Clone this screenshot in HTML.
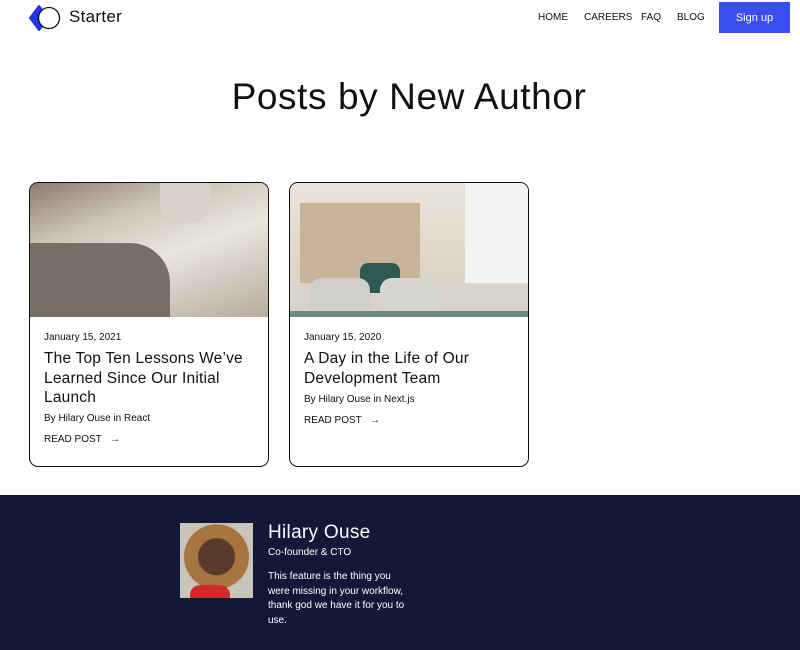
<!DOCTYPE html>
<html><head><style>
*{margin:0;padding:0;box-sizing:border-box}
body{width:800px;height:650px;overflow:hidden;background:#fff;font-family:"Liberation Sans",sans-serif;color:#111;position:relative}
.abs{position:absolute}
.nav a{position:absolute;top:12px;font-size:10px;color:#111;text-decoration:none;white-space:nowrap}
.card{position:absolute;top:182px;width:240px;height:285px;border:1.5px solid #111;border-radius:9px;overflow:hidden;background:#fff}
.card .img{height:134px}
.date{position:absolute;left:14px;top:149px;font-size:10px}
.title{position:absolute;left:14px;top:166px;width:215px;font-size:15.5px;line-height:19.5px;letter-spacing:0.2px}
.by{font-size:10px;position:absolute;left:14px}
.read{font-size:10px;position:absolute;left:14px}
</style></head><body>
<svg class="abs" style="left:29px;top:4px" width="42" height="28" viewBox="0 0 42 28">
<path d="M10 2 L20 14 L10 26 L1 14 Z" fill="#2134e8" stroke="#2134e8" stroke-linejoin="round" stroke-width="2"/>
<circle cx="20" cy="14" r="10.5" fill="#fff" stroke="#111" stroke-width="1.3"/>
</svg>
<div class="abs" style="left:69px;top:7px;font-size:17px;letter-spacing:0.3px">Starter</div>
<div class="nav"><a style="left:538px">HOME</a><a style="left:584px">CAREERS</a><a style="left:641px">FAQ</a><a style="left:677px">BLOG</a></div>
<div class="abs" style="left:719px;top:2px;width:71px;height:31px;background:#3a4ef0;color:#fff;font-size:11px;text-align:center;line-height:33px">Sign up</div>
<div class="abs" style="left:0;width:818px;top:76px;text-align:center;font-size:37px;letter-spacing:0.6px">Posts by New Author</div>

<div class="card" style="left:29px">
<div class="img" style="background:linear-gradient(160deg,#8a7c6c 0%,#cfc6b8 30%,#e9e5df 55%,#b7ab9c 100%);position:relative">
<div class="abs" style="left:0;top:60px;width:140px;height:74px;background:#7a6f66;border-radius:0 40px 0 0"></div>
<div class="abs" style="left:130px;top:0;width:50px;height:40px;background:#d8d2c8;border-radius:0 0 20px 20px"></div>
</div>
<div class="date">January 15, 2021</div>
<div class="title">The Top Ten Lessons We’ve Learned Since Our Initial Launch</div>
<div class="by" style="top:230px">By Hilary Ouse in React</div>
<div class="read" style="top:251px">READ POST &nbsp;&nbsp;→</div>
</div>

<div class="card" style="left:289px">
<div class="img" style="background:linear-gradient(180deg,#e8e4dc 0%,#e0d6c8 60%,#d5d2cc 100%);position:relative">
<div class="abs" style="left:10px;top:20px;width:120px;height:80px;background:#c9b49a"></div>
<div class="abs" style="left:175px;top:0;width:65px;height:100px;background:#f3f3f1"></div>
<div class="abs" style="left:70px;top:80px;width:40px;height:30px;background:#2c5a52;border-radius:8px"></div>
<div class="abs" style="left:20px;top:95px;width:60px;height:39px;background:#cfd0cc;border-radius:12px"></div>
<div class="abs" style="left:90px;top:95px;width:60px;height:39px;background:#d5d6d2;border-radius:12px"></div>
<div class="abs" style="left:0;top:128px;width:240px;height:6px;background:#6e8a84"></div>
</div>
<div class="date">January 15, 2020</div>
<div class="title">A Day in the Life of Our Development Team</div>
<div class="by" style="top:211px">By Hilary Ouse in Next.js</div>
<div class="read" style="top:232px">READ POST &nbsp;&nbsp;→</div>
</div>

<div class="abs" style="left:0;top:495px;width:800px;height:155px;background:#121838"></div>
<div class="abs" style="left:180px;top:523px;width:73px;height:75px;background:radial-gradient(circle at 50% 45%,#5a3a2a 0 18px,#a8743f 19px 32px,#c9c4b9 33px);overflow:hidden">
<div class="abs" style="left:10px;top:62px;width:40px;height:20px;background:#d22a2a;border-radius:10px 10px 0 0"></div></div>
<div class="abs" style="left:268px;top:522px;font-size:19px;color:#fff;letter-spacing:0.3px">Hilary Ouse</div>
<div class="abs" style="left:268px;top:547px;font-size:10px;color:#fff">Co-founder &amp; CTO</div>
<div class="abs" style="left:268px;top:570px;width:140px;font-size:10px;line-height:14.5px;color:#fff">This feature is the thing you were missing in your workflow, thank god we have it for you to use.</div>
</body></html>
